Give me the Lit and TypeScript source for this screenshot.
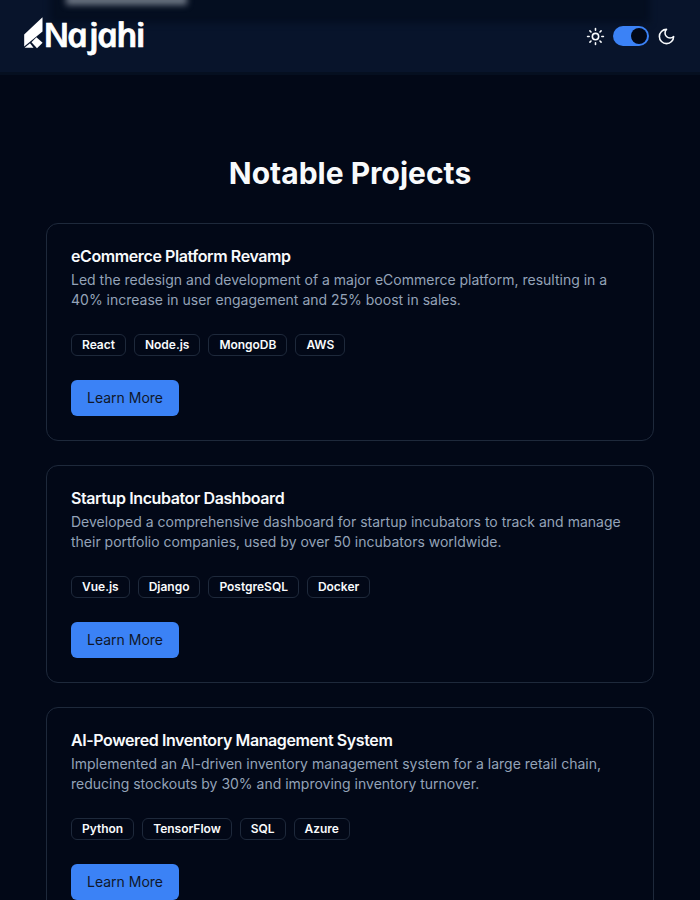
import { LitElement, html, css } from "lit";
import { customElement, property } from "lit/decorators.js";

interface Project {
  title: string;
  text: string;
  tags: string[];
}

const projects: Project[] = [
  {
    title: "eCommerce Platform Revamp",
    text: "Led the redesign and development of a major eCommerce platform, resulting in a 40% increase in user engagement and 25% boost in sales.",
    tags: ["React", "Node.js", "MongoDB", "AWS"],
  },
  {
    title: "Startup Incubator Dashboard",
    text: "Developed a comprehensive dashboard for startup incubators to track and manage their portfolio companies, used by over 50 incubators worldwide.",
    tags: ["Vue.js", "Django", "PostgreSQL", "Docker"],
  },
  {
    title: "AI-Powered Inventory Management System",
    text: "Implemented an AI-driven inventory management system for a large retail chain, reducing stockouts by 30% and improving inventory turnover.",
    tags: ["Python", "TensorFlow", "SQL", "Azure"],
  },
];

@customElement("site-header")
export class SiteHeader extends LitElement {
  static styles = css`
    :host {
      display: flex;
      position: relative;
      flex: none;
      box-sizing: border-box;
      height: 75px;
      padding: 0 24px;
      align-items: center;
      justify-content: space-between;
      background: #08142b;
      border-bottom: 3px solid #050f20;
      overflow: hidden;
      color: #f8fafc;
    }
    .behind {
      position: absolute;
      left: 50px;
      right: 50px;
      top: -10px;
      height: 33px;
      background: #040e20;
      filter: blur(3px);
    }
    .smudge {
      position: absolute;
      left: 66px;
      top: -5px;
      width: 121px;
      height: 10px;
      background: #6c7583;
      filter: blur(3px);
    }
    .logo {
      position: relative;
      display: block;
      overflow: visible;
    }
    /* the italic cut has the single-storey a; the skew sets it upright */
    .word {
      font: italic 600 33.5px "Open Sans", sans-serif;
      fill: #fff;
      stroke: #fff;
      stroke-width: 0.7;
    }
    .theme {
      position: relative;
      display: flex;
      align-items: center;
      gap: 8px;
    }
    .theme svg {
      display: block;
    }
    .switch {
      box-sizing: border-box;
      width: 36px;
      height: 20px;
      border-radius: 10px;
      padding: 2px;
      display: flex;
      justify-content: flex-end;
      background: #3b82f6;
    }
    .thumb {
      width: 16px;
      height: 16px;
      border-radius: 50%;
      background: #020817;
    }
  `;

  render() {
    return html`
      <div class="behind"></div>
      <div class="smudge"></div>
      <svg class="logo" width="124" height="48" viewBox="0 0 124 48">
        <path fill="#fff" d="M18.5 5.2V19.5L.2 34.5V22.5Z" />
        <path fill="#fff" d="M12.4 25.3 18.6 30.8 13 36.2 7.5 30.2Z" />
        <path fill="#fff" d="M6 31.3 9.5 35.8H.6Z" />
        <text class="word" transform="translate(0 35.1) skewX(12.8) scale(1.08 1)" y="0" x="19.6 41.7 62 69.4 87.3 105.4">Najahi</text>
      </svg>
      <div class="theme">
        <svg width="19" height="19" viewBox="0 0 24 24" fill="none" stroke="currentColor" stroke-width="2" stroke-linecap="round" stroke-linejoin="round">
          <circle cx="12" cy="12" r="4" />
          <path d="M12 2v2M12 20v2M4.93 4.93l1.41 1.41M17.66 17.66l1.41 1.41M2 12h2M20 12h2M6.34 17.66l-1.41 1.41M19.07 4.93l-1.41 1.41" />
        </svg>
        <div class="switch"><div class="thumb"></div></div>
        <svg width="19" height="19" viewBox="0 0 24 24" fill="none" stroke="currentColor" stroke-width="2" stroke-linecap="round" stroke-linejoin="round">
          <path d="M12 3a6 6 0 0 0 9 9 9 9 0 1 1-9-9Z" />
        </svg>
      </div>
    `;
  }
}

@customElement("project-card")
export class ProjectCard extends LitElement {
  @property({ attribute: false }) project!: Project;

  static styles = css`
    :host {
      display: block;
      box-sizing: border-box;
      border: 1px solid #1e293b;
      border-radius: 12px;
      padding: 24px;
    }
    h3 {
      margin: 0 0 6px;
      font-size: 16px;
      line-height: 16px;
      font-weight: 600;
      letter-spacing: -0.4px;
      color: #f8fafc;
    }
    p {
      margin: 0 0 24px;
      font-size: 14px;
      line-height: 20px;
      color: #94a3b8;
    }
    .tags {
      display: flex;
      gap: 8px;
      margin-bottom: 24px;
    }
    .tag {
      border: 1px solid #1e293b;
      border-radius: 6px;
      padding: 2px 10px;
      font-size: 12px;
      line-height: 16px;
      font-weight: 600;
      letter-spacing: -0.015px;
      color: #f8fafc;
    }
    button {
      display: block;
      height: 36px;
      padding: 0 16px;
      border: 0;
      border-radius: 6px;
      background: #3b82f6;
      color: #0f172a;
      font: 400 14px/20px Inter, sans-serif;
    }
  `;

  render() {
    const { title, text, tags } = this.project;
    return html`
      <h3>${title}</h3>
      <p>${text}</p>
      <div class="tags">${tags.map((t) => html`<span class="tag">${t}</span>`)}</div>
      <button>Learn More</button>
    `;
  }
}

@customElement("app-root")
export class AppRoot extends LitElement {
  static styles = css`
    :host {
      display: flex;
      flex-direction: column;
      height: 900px;
      overflow: hidden;
      background: #020817;
      font-family: Inter, sans-serif;
    }
    main {
      padding: 80px 46px 0;
    }
    h2 {
      margin: 0 0 32px;
      font-size: 30px;
      line-height: 36px;
      font-weight: 700;
      text-align: center;
      color: #f8fafc;
    }
    .list {
      display: grid;
      gap: 24px;
    }
  `;

  render() {
    return html`
      <site-header></site-header>
      <main>
        <h2>Notable Projects</h2>
        <div class="list">
          ${projects.map((p) => html`<project-card .project=${p}></project-card>`)}
        </div>
      </main>
    `;
  }
}
